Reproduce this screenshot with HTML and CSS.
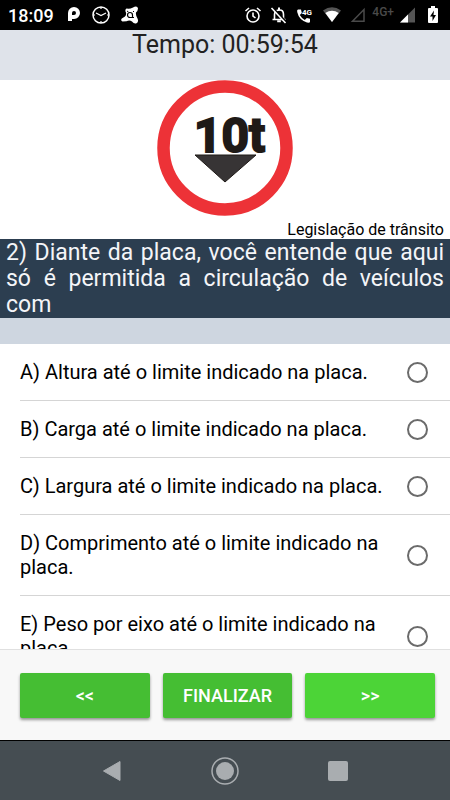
FILE: index.html
```html
<!DOCTYPE html>
<html lang="pt-BR">

<head>
    <meta charset="UTF-8">
    <meta name="viewport" content="width=device-width, initial-scale=1.0">
    <link rel="stylesheet" href="styles.css">
    <title>Simulado</title>
</head>

<body>
    <div class="status">
        <span class="clock">18:09</span>
        <div class="status-left">
            <svg width="14" height="18" viewBox="0 0 14 18">
                <path d="M3 15V7a4 4 0 1 1 4 4H5" fill="none" stroke="#fff" stroke-width="4" />
            </svg>
            <svg width="20" height="20" viewBox="0 0 20 20" fill="none" stroke="#fff">
                <circle cx="10" cy="10" r="8" stroke-width="1.5" />
                <path d="M5 8l5 2.5 5-2.5M10 2v2M10 16v2M2 10h2M16 10h2" stroke-width="1.2" />
            </svg>
            <svg width="18" height="18" viewBox="0 0 18 18">
                <path d="M5.500 2.500Q9 3 11.500 1.800L13.500 .8Q16.500-.2 17 2.500 17 4.500 15 6.500 14.500 9 16.500 12.500 18 16 15.500 17.300 13 18.200 11 15.500 8.500 13.500 5.500 15.300L1.500 15.500Q-.8 14.500.8 12.500L4 10.500Q6 8 4.500 5.500 4 3 5.500 2.500Z" fill="#fff" />
                <path d="M11.500 11.500H9a2.500 2.500 0 1 1 2.500-2.500v2.500h1.500" fill="none" stroke="#000" stroke-width="1.2" />
                <path d="M6 5l1.500 1M13 5l-1 1" stroke="#000" />
            </svg>
        </div>
        <div class="status-right">
            <svg width="18" height="18" viewBox="0 0 18 18" fill="none" stroke="#fff" stroke-width="1.6">
                <circle cx="9" cy="10" r="6" />
                <path d="M9 6.500V10l2.500 2M1.500 5l3.500-3M16.500 5L13 2" />
            </svg>
            <svg width="18" height="18" viewBox="0 0 18 18">
                <path d="M4.500 13V8.500Q4.500 4.500 9 4t4.500 4.500V13M2.500 13.500h13" fill="none" stroke="#fff" stroke-width="1.6" />
                <path d="M9 1.500v3M7.200 15.200h3.600" stroke="#fff" stroke-width="2" />
                <path d="M2.500 1.500l14 15" stroke="#000" stroke-width="2" />
                <path d="M1.500 2l14 15" stroke="#fff" stroke-width="1.6" />
            </svg>
            <svg width="18" height="18" viewBox="0 0 18 18">
                <path d="M2 3.500h3l.8 3.500-2 2q2 3.500 5 5l2-2 3.200.8v3Q14 17 11 16.500 3 14 1.200 6 .8 3.500 2 3.500Z" fill="#fff" />
                <text x="6" y="9" class="tiny">4G</text>
            </svg>
            <svg width="20" height="16" viewBox="0 0 20 16">
                <path d="M1 3.500Q10-3 19 3.500L10 15Z" fill="#555" />
                <path d="M3.300 6Q10 1.700 16.700 6L10 15Z" fill="#fff" />
            </svg>
            <svg width="16" height="16" viewBox="0 0 16 16">
                <path d="M2.500 14.200H14V2.500Z" fill="none" stroke="#4a4a4a" stroke-width="1.5" />
            </svg>
            <span class="network">4G+</span>
            <svg width="16" height="16" viewBox="0 0 16 16">
                <path d="M0 15.500L15 .5v15Z" fill="#555" />
                <path d="M0 15.500L8 7.500v8Z" fill="#fff" />
            </svg>
            <svg class="battery" width="10" height="18" viewBox="0 0 10 18">
                <path d="M3 0h4v2h2q1 0 1 1v13q0 1-1 1H1q-1 0-1-1V3q0-1 1-1h2Z" fill="#fff" />
                <path d="M6 4.500L2 10.500h2.500v4.500L8 9H5.500Z" fill="#000" />
            </svg>
        </div>
    </div>

    <header class="timer">
        <h1>Tempo: 00:59:54</h1>
    </header>

    <main class="content">
        <div class="picture">
            <svg width="136" height="136" viewBox="0 0 136 136">
                <circle cx="68" cy="68" r="61.500" fill="#fff" stroke="#ed3237" stroke-width="12.500" />
                <text x="37" y="72" class="sign">10t</text>
                <path d="M38 75h61L68 102Z" fill="#373435" stroke="#1f1a17" />
            </svg>
        </div>
        <p class="subject">Legislação de trânsito</p>
        <h2 class="question" id="question">2) Diante da placa, você entende que aqui só é permitida a circulação de veículos com</h2>

        <div class="answers" role="radiogroup" aria-labelledby="question">
            <label class="answer">
                <span class="item">
                    <span class="text">A) Altura até o limite indicado na placa.</span>
                    <input type="radio" name="answer" value="a">
                </span>
            </label>
            <label class="answer">
                <span class="item">
                    <span class="text">B) Carga até o limite indicado na placa.</span>
                    <input type="radio" name="answer" value="b">
                </span>
            </label>
            <label class="answer">
                <span class="item">
                    <span class="text">C) Largura até o limite indicado na placa.</span>
                    <input type="radio" name="answer" value="c">
                </span>
            </label>
            <label class="answer">
                <span class="item">
                    <span class="text">D) Comprimento até o limite indicado na placa.</span>
                    <input type="radio" name="answer" value="d">
                </span>
            </label>
            <label class="answer">
                <span class="item">
                    <span class="text">E) Peso por eixo até o limite indicado na placa.</span>
                    <input type="radio" name="answer" value="e">
                </span>
            </label>
        </div>
    </main>

    <footer class="actions">
        <button type="button">&lt;&lt;</button>
        <button type="button">FINALIZAR</button>
        <button type="button" class="next">&gt;&gt;</button>
    </footer>

    <nav class="system">
        <button type="button" aria-label="Voltar">
            <svg width="20" height="22" viewBox="0 0 20 22">
                <path d="M1.500 11L18 1.500v19Z" fill="#a9adb0" stroke="#a9adb0" stroke-linejoin="round" />
            </svg>
        </button>
        <button type="button" aria-label="Início">
            <svg width="28" height="28" viewBox="0 0 28 28">
                <circle cx="14" cy="14" r="13" fill="none" stroke="#a9adb0" stroke-width="1.500" />
                <circle cx="14" cy="14" r="9" fill="#a9adb0" />
            </svg>
        </button>
        <button type="button" aria-label="Recentes">
            <svg width="20" height="20" viewBox="0 0 20 20">
                <rect x="0" y="0" width="20" height="20" rx="2" fill="#a9adb0" />
            </svg>
        </button>
    </nav>
</body>

</html>
```
FILE: styles.css
```css
* {
    box-sizing: border-box;
}

body {
    display: flex;
    flex-direction: column;
    height: 100vh;
    margin: 0;
    font-family: Roboto, "Liberation Sans", sans-serif;
    background: white;
    color: black;
}

h1,
h2,
p {
    margin: 0;
    font-weight: 400;
}

svg {
    display: block;
    flex: none;
}

button {
    border: 0;
    padding: 0;
    font-family: inherit;
    cursor: pointer;
}

/* status bar */
.status {
    display: flex;
    flex: none;
    align-items: center;
    height: 30px;
    padding: 0 12px 0 8px;
    background: black;
    color: white;
}

.clock {
    font-size: 18px;
    font-weight: 500;
}

.status-left {
    display: flex;
    align-items: center;
    gap: 10px;
    margin-left: 13px;
}

.status-right {
    display: flex;
    align-items: center;
    gap: 8px;
    margin-left: auto;
}

.tiny {
    font-size: 8px;
    font-weight: 700;
    fill: white;
}

.network {
    margin: 0 -2px;
    font-size: 12px;
    font-weight: 500;
    line-height: 16px;
    padding-bottom: 6px;
    color: #4a4a4a;
}

.battery {
    margin-left: 4px;
}

/* timer */
.timer {
    flex: none;
    height: 50px;
    background: #dfe3ea;
    text-align: center;
}

.timer h1 {
    font-size: 25px;
    line-height: 30px;
    color: #222;
}

/* question */
.content {
    flex: 1;
    min-height: 0;
    overflow-y: auto;
    scrollbar-width: none;
}

.picture {
    display: flex;
    justify-content: center;
}

.sign {
    font-family: "Liberation Sans Narrow", Roboto, sans-serif;
    font-size: 48px;
    font-weight: 700;
    fill: #1f1a17;
    stroke: #1f1a17;
    stroke-width: 2px;
}

.subject {
    padding: 5px 6px 0;
    font-size: 16px;
    line-height: 18px;
    text-align: right;
}

.question {
    padding: 1px 6px 0;
    background: #2c3e50;
    color: #f4f5f8;
    font-size: 23px;
    line-height: 26px;
    text-align: justify;
}

.answers {
    border-top: 26px solid #ced6e0;
}

.answer {
    display: block;
    padding-left: 20px;
}

.item {
    display: flex;
    align-items: center;
    justify-content: space-between;
    gap: 20px;
    padding: 16px 22px 16px 0;
    border-bottom: 1px solid #d5d5d5;
}

.text {
    font-size: 20px;
    line-height: 24px;
}

.answer input {
    appearance: none;
    flex: none;
    width: 21px;
    height: 21px;
    margin: 0;
    border: 2px solid #6b6b6b;
    border-radius: 50%;
}

.answer input:checked {
    background: #43bd31;
}

/* bottom buttons */
.actions {
    display: flex;
    flex: none;
    gap: 13px;
    padding: 23px 15px 22px 20px;
    border-top: 1px solid #e0e0e0;
    background: #f8f8f8;
}

.actions button {
    flex: 1;
    height: 45px;
    border-radius: 2px;
    background: #45be33;
    box-shadow: 0 2px 3px rgba(0, 0, 0, 0.4);
    color: white;
    font-size: 18px;
    font-weight: 500;
}

.actions .next {
    background: #4cd437;
}

/* system keys */
.system {
    display: flex;
    flex: none;
    justify-content: center;
    gap: 84px;
    height: 60px;
    border-top: 1px solid black;
    background: #454d52;
}

.system button {
    display: flex;
    align-items: center;
    justify-content: center;
    width: 29px;
    background: none;
}
```
